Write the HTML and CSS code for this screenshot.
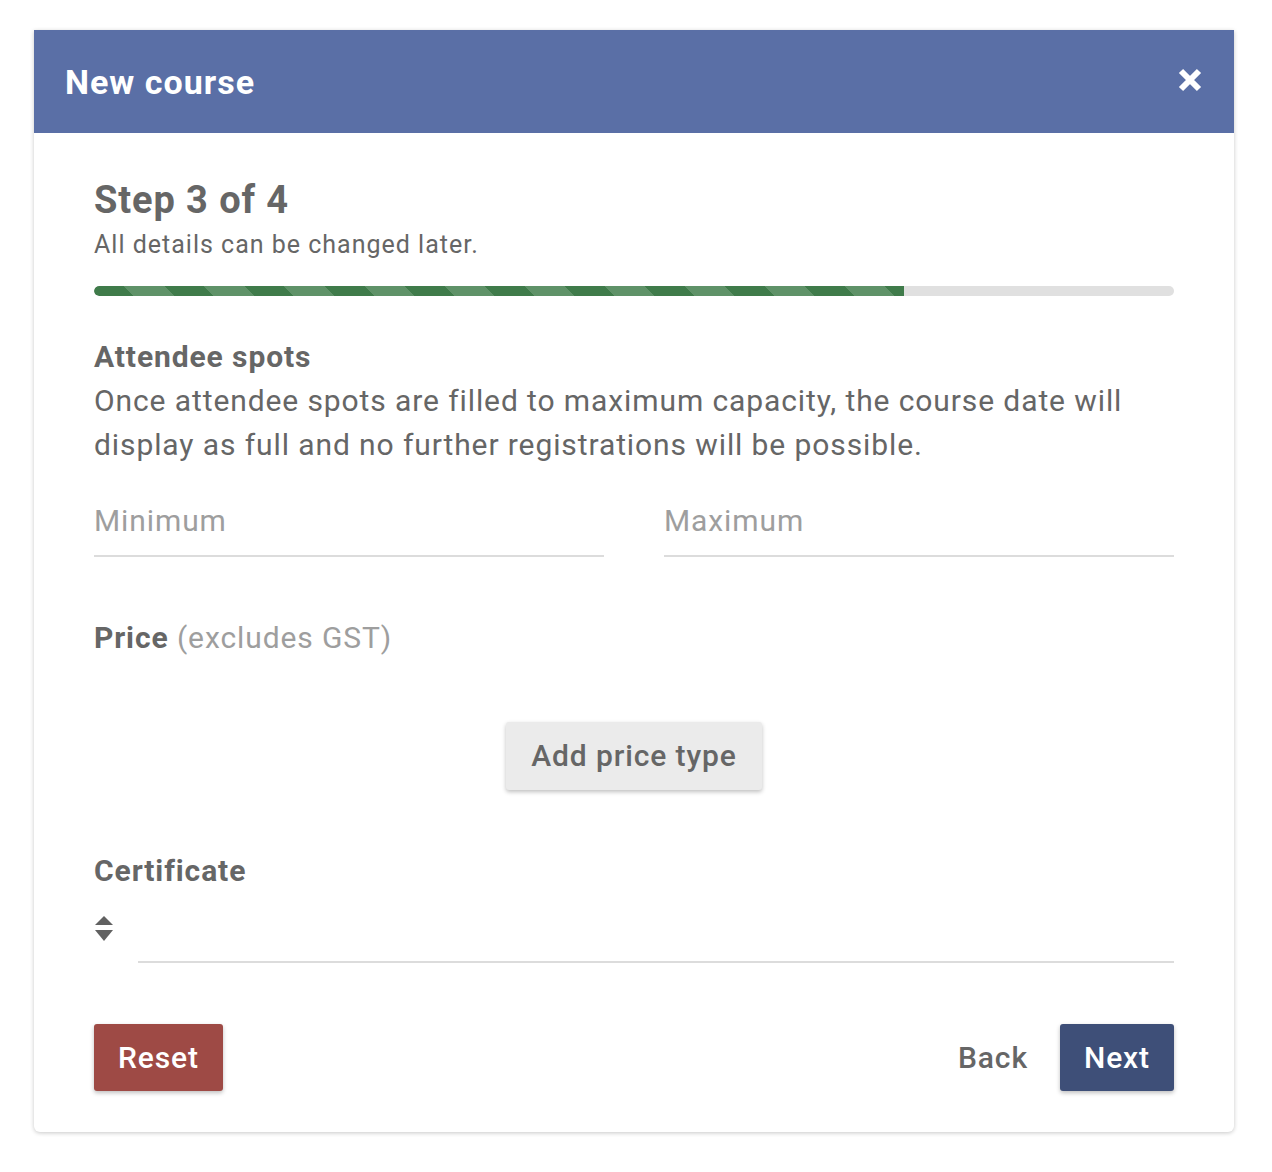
FILE: index.html
```html
<!DOCTYPE html>
<html lang="en">
<head>
<meta charset="utf-8">
<title>New course</title>
<link rel="stylesheet" href="styles.css">
</head>
<body>
<div class="modal">
  <header class="modal-header">
    <h1 class="modal-title">New course</h1>
    <button class="close" aria-label="Close">
      <svg width="24" height="24" viewBox="0 0 24 24"><path d="M3 3 L21 21 M21 3 L3 21" stroke="#fff" stroke-width="6" stroke-linecap="butt"/></svg>
    </button>
  </header>
  <div class="modal-body">
    <h2 class="step-title">Step 3 of 4</h2>
    <p class="step-sub">All details can be changed later.</p>
    <div class="progress"><div class="progress-fill" style="width:75%"></div></div>

    <h3 class="section-title">Attendee spots</h3>
    <p class="section-text">Once attendee spots are filled to maximum capacity, the course date will display as full and no further registrations will be possible.</p>

    <div class="fields">
      <div class="field">Minimum</div>
      <div class="field">Maximum</div>
    </div>

    <h3 class="section-title price-title">Price <span class="muted">(excludes GST)</span></h3>
    <div class="center-row">
      <button class="btn btn-light">Add price type</button>
    </div>

    <h3 class="section-title cert-title">Certificate</h3>
    <div class="select-row">
      <span class="select-icon">
        <svg width="18" height="26" viewBox="0 0 18 26"><path d="M9 0 L18 9 L0 9 Z" fill="#616161"/><path d="M0 14 L18 14 L9 25 Z" fill="#616161"/></svg>
      </span>
      <div class="select-line"></div>
    </div>

    <div class="footer">
      <button class="btn btn-reset">Reset</button>
      <div class="footer-right">
        <button class="btn btn-text">Back</button>
        <button class="btn btn-next">Next</button>
      </div>
    </div>
  </div>
</div>
</body>
</html>
```

FILE: styles.css
```css
html, body {
  margin: 0;
  padding: 0;
  background: #fff;
}
body {
  font-family: Roboto, "Liberation Sans", Arial, sans-serif;
  color: #666;
  letter-spacing: 0.9px;
  padding: 30px 38px 40px 34px;
}
.modal {
  width: 1200px;
  background: #fff;
  border-radius: 0 0 6px 6px;
  box-shadow: 0 1px 4px rgba(0,0,0,0.22);
}
.modal-header {
  height: 103px;
  background: #5a6fa6;
  display: flex;
  align-items: center;
  justify-content: space-between;
  padding: 0 32px 0 31px;
  box-sizing: border-box;
}
.modal-title {
  margin: 0;
  color: #fff;
  font-size: 34px;
  font-weight: 700;
  line-height: 40px;
  letter-spacing: 1px;
}
.close {
  background: none;
  border: 0;
  padding: 0;
  width: 24px;
  height: 24px;
  display: flex;
  cursor: pointer;
  margin-top: -4px;
}
.modal-body {
  padding: 44px 60px 41px 60px;
}
.step-title {
  margin: 0;
  font-size: 38px;
  line-height: 46px;
  font-weight: 700;
  color: #666;
  letter-spacing: 0.9px;
}
.step-sub {
  margin: 6px 0 0;
  font-size: 25px;
  line-height: 32px;
  letter-spacing: 1px;
}
.progress {
  margin-top: 25px;
  height: 10px;
  border-radius: 5px;
  background: #e0e0e0;
  overflow: hidden;
}
.progress-fill {
  height: 100%;
  border-radius: 5px 0 0 5px;
  background: repeating-linear-gradient(45deg, #3f7b4a 0 28.28px, #5f9268 28.28px 56.57px);
}
.section-title {
  margin: 43px 0 0;
  font-size: 30px;
  line-height: 36px;
  font-weight: 700;
  color: #666;
}
.section-text {
  margin: 4px 0 0;
  font-size: 30px;
  line-height: 44px;
}
.fields {
  display: grid;
  grid-template-columns: 1fr 1fr;
  column-gap: 60px;
  margin-top: 36px;
}
.field {
  font-size: 30px;
  line-height: 36px;
  color: #9e9e9e;
  padding-bottom: 16px;
  border-bottom: 2px solid #dcdcdc;
}
.price-title {
  margin-top: 63px;
}
.muted {
  font-weight: 400;
  color: #9e9e9e;
}
.center-row {
  display: flex;
  justify-content: center;
  margin-top: 66px;
}
.btn {
  font-family: inherit;
  letter-spacing: 0.9px;
  border: 0;
  border-radius: 3px;
  font-size: 30px;
  line-height: 36px;
  cursor: pointer;
}
.btn-light {
  background: #ebebeb;
  color: #666;
  height: 68px;
  padding: 0 25px;
  font-weight: 500;
  box-shadow: 0 2px 4px rgba(0,0,0,0.25);
}
.cert-title {
  margin-top: 63px;
}
.select-row {
  display: flex;
  align-items: flex-end;
  height: 74px;
}
.select-icon {
  width: 44px;
  align-self: flex-start;
  margin-top: 27px;
  display: flex;
}
.select-icon svg {
  margin-left: 1px;
}
.select-line {
  flex: 1;
  border-bottom: 2px solid #dcdcdc;
}
.footer {
  display: flex;
  justify-content: space-between;
  align-items: center;
  margin-top: 61px;
}
.footer-right {
  display: flex;
  align-items: center;
  gap: 24px;
}
.btn-reset {
  background: #9e4a45;
  color: #fff;
  height: 67px;
  padding: 0 24px;
  font-weight: 500;
  box-shadow: 0 2px 4px rgba(0,0,0,0.25);
}
.btn-text {
  background: none;
  color: #666;
  font-weight: 500;
  padding: 0 8px;
  height: 67px;
}
.btn-next {
  background: #3e4f78;
  color: #fff;
  height: 67px;
  padding: 0 24px;
  font-weight: 500;
  box-shadow: 0 2px 4px rgba(0,0,0,0.25);
}
```
